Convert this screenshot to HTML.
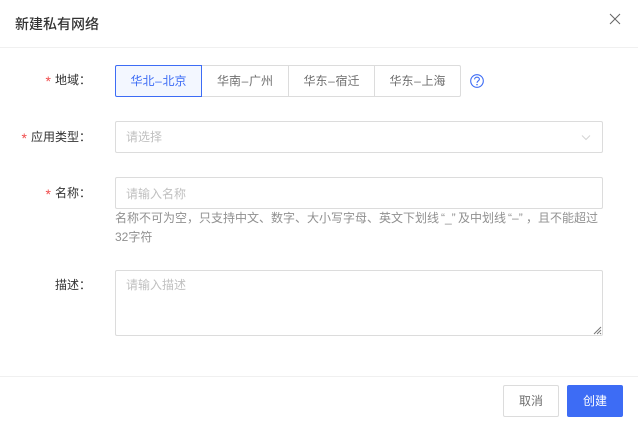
<!DOCTYPE html>
<html lang="zh-CN">
<head>
<meta charset="utf-8">
<style>
html,body{margin:0;padding:0;background:#fff}
body{width:638px;height:425px;position:relative;overflow:hidden;font-family:"Liberation Sans","Noto Sans CJK SC",sans-serif;font-size:12px;color:#333}
#w{position:absolute;left:0;top:0;width:638px;height:425px;filter:blur(.3px)}
.a{position:absolute;white-space:nowrap}
.line{position:absolute;left:0;width:638px;height:1px;background:#f0f0f0}
.box{position:absolute;box-sizing:border-box;border:1px solid #dcdcdc;border-radius:2px;background:#fff;left:115px;width:488px}
.ph{position:absolute;left:126px;color:#c0c0c0;line-height:16px;white-space:nowrap}
.lab{position:absolute;right:547px;line-height:16px;white-space:nowrap;color:#333}
.lab i{font-style:normal;font-size:14px;color:#f04b4b;margin-right:4px;position:relative;top:2px;line-height:10px}
.lab b{font-weight:400}
.seg{position:absolute;top:65px;height:32px;box-sizing:border-box;border:1px solid #dcdcdc;text-align:center;line-height:30px;color:#707070;background:#fff;white-space:nowrap}
.seg u{text-decoration:none;display:inline-block;width:8px;text-align:center}
.btn{position:absolute;top:385px;height:32px;width:56px;box-sizing:border-box;border-radius:2px;text-align:center;line-height:30px;white-space:nowrap}
</style>
</head>
<body>
<div id="w">
<div class="a" style="left:15px;top:14px;font-size:14px;line-height:20px;color:#333;font-weight:500">新建私有网络</div>
<svg style="position:absolute;left:609px;top:13px" width="12" height="12" viewBox="0 0 12 12"><path d="M1 1L11 11M11 1L1 11" stroke="#666" stroke-width="1" fill="none"/></svg>
<div class="line" style="top:47px"></div>

<div class="lab" style="top:72px"><i>*</i>地域<b>：</b></div>
<div class="seg" style="left:201px;width:88px">华南<u>–</u>广州</div>
<div class="seg" style="left:288px;width:87px">华东<u>–</u>宿迁</div>
<div class="seg" style="left:374px;width:87px;border-radius:0 2px 2px 0">华东<u>–</u>上海</div>
<div class="seg" style="left:115px;width:87px;border-color:#3d6cf5;color:#3d6cf5;background:#f3f7ff;border-radius:2px 0 0 2px">华北<u>–</u>北京</div>
<svg style="position:absolute;left:470px;top:74px" width="14" height="14" viewBox="0 0 14 14"><circle cx="7" cy="7" r="6.3" fill="none" stroke="#3d6cf5" stroke-width="1.1"/><path d="M4.6 5.4C4.6 4 5.7 3.2 7 3.2C8.4 3.2 9.4 4.1 9.4 5.3C9.4 6.8 7 7 7 8.9" fill="none" stroke="#3d6cf5" stroke-width="1.1"/><circle cx="7" cy="10.6" r=".75" fill="#3d6cf5"/></svg>

<div class="lab" style="top:129px"><i>*</i>应用类型<b>：</b></div>
<div class="box" style="top:121px;height:32px"></div>
<div class="ph" style="top:129px">请选择</div>
<svg style="position:absolute;left:581px;top:134px" width="10" height="8" viewBox="0 0 10 8"><path d="M1 1.5L5 5.5L9 1.5" fill="none" stroke="#d4d4d4" stroke-width="1"/></svg>

<div class="lab" style="top:185px"><i>*</i>名称<b>：</b></div>
<div class="box" style="top:177px;height:32px"></div>
<div class="ph" style="top:186px">请输入名称</div>
<div class="a" style="left:115px;top:209px;line-height:19px;color:#909090">名称不可为空，只支持中文、数字、大小写字母、英文下划线<span style="padding:0 2.33px 0 2px">“_”</span>及中划线<span style="padding:0 3.33px 0 2px">“–”</span>，且不能超过<br>32字符</div>

<div class="lab" style="top:277px">描述<b>：</b></div>
<div class="box" style="top:270px;height:66px"></div>
<div class="ph" style="top:277px">请输入描述</div>
<svg style="position:absolute;left:593px;top:326px" width="9" height="9" viewBox="0 0 9 9"><path d="M1 8L8 1M4 8L8 4M7 8L8 7" stroke="#777" stroke-width="1" fill="none"/></svg>

<div class="line" style="top:376px"></div>
<div class="btn" style="left:503px;border:1px solid #dcdcdc;color:#707070;background:#fff">取消</div>
<div class="btn" style="left:567px;background:#3d6cf5;color:#fff;line-height:32px">创建</div>
</div>
</body>
</html>
